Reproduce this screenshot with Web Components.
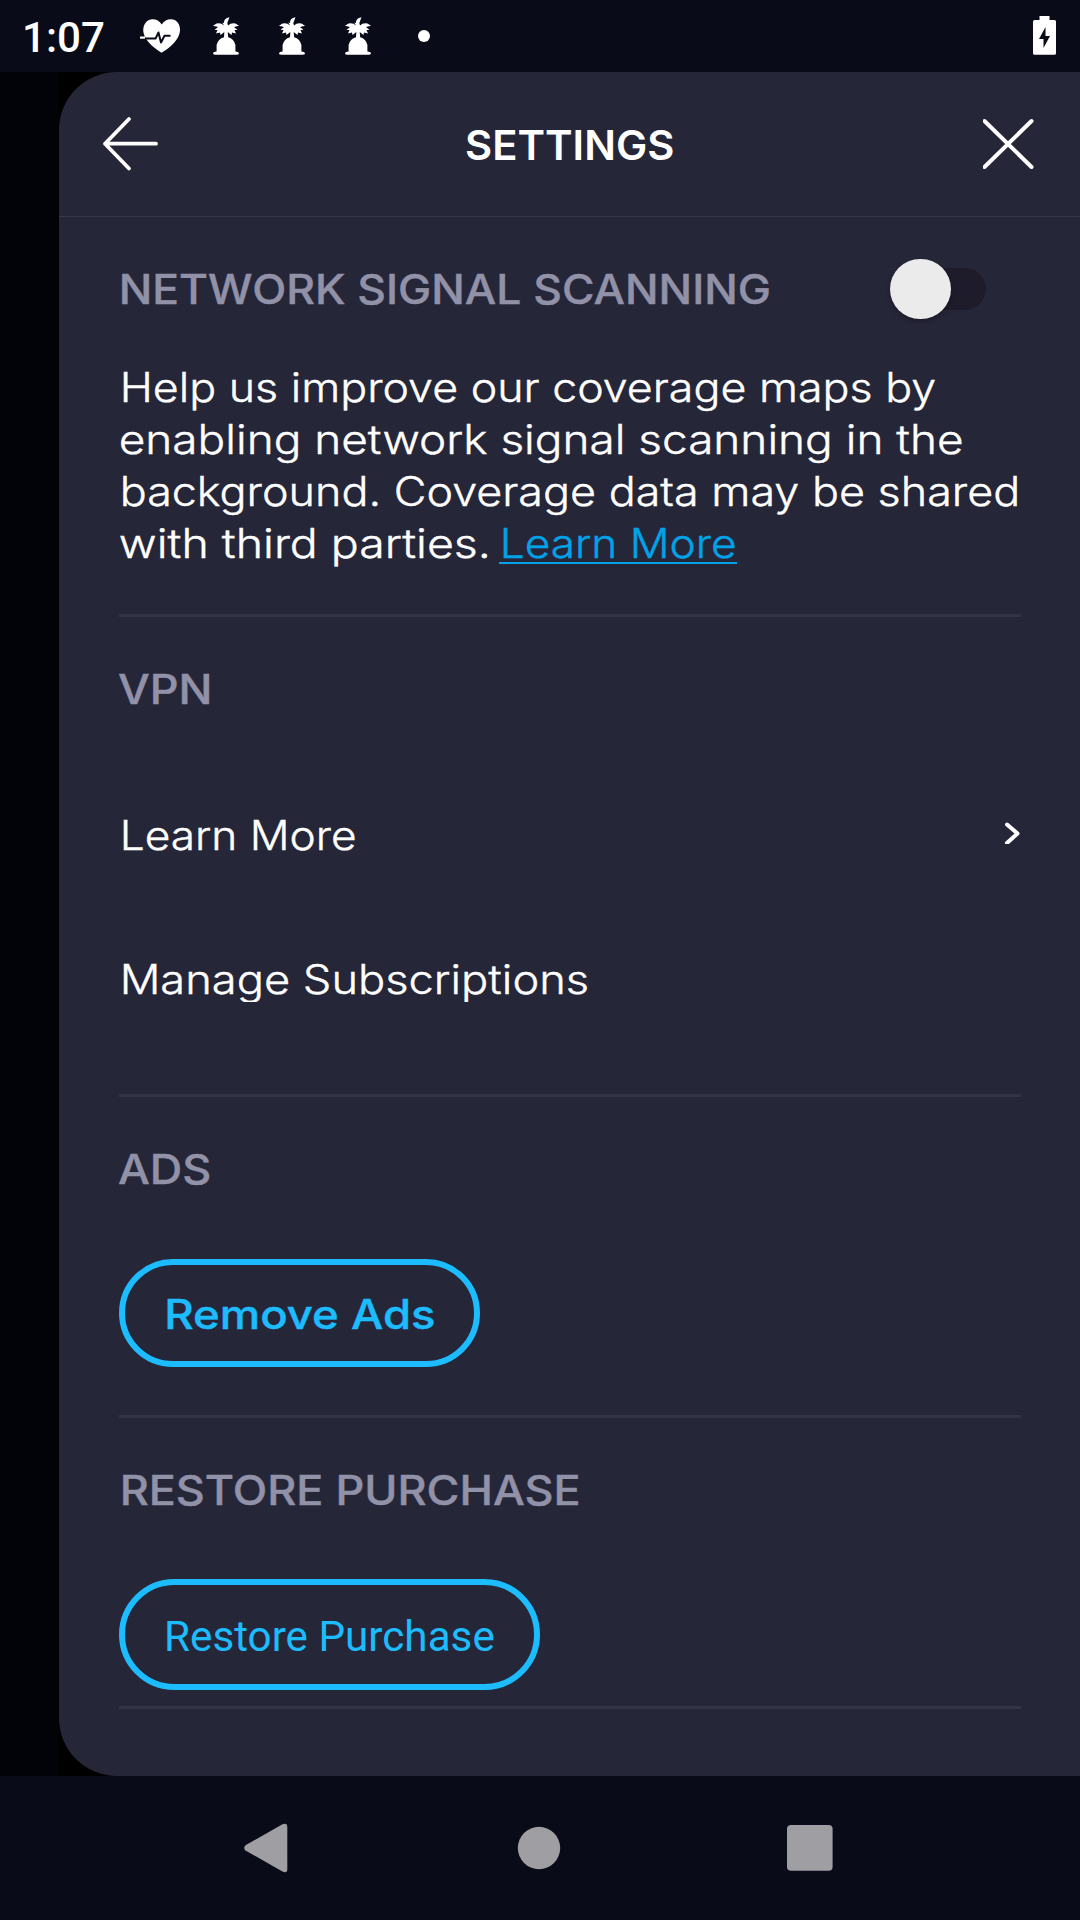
<!DOCTYPE html>
<html lang="en">
<head>
<meta charset="utf-8">
<title>Settings</title>
<style>
html,body{margin:0;padding:0;background:#000}
body{width:1080px;height:1920px;overflow:hidden}
</style>
</head>
<body>
<settings-screen></settings-screen>
<script>
const define = (name, html, setup) => customElements.define(name, class extends HTMLElement {
  connectedCallback() {
    if (this.shadowRoot) return;
    this.attachShadow({ mode: 'open' }).innerHTML = html;
    if (setup) setup.call(this, this.shadowRoot);
  }
});

// One line of text whose ink starts at `indent` and spans `ink` pixels; `base` is the baseline inside the `h` tall box.
define('fit-text', `<style>
:host{display:block;white-space:nowrap;flex:none;font:300 40.5px/1 Inter,sans-serif;-webkit-text-stroke:.4px currentColor}
span{display:block;width:max-content;transform-origin:0 0}
</style><span></span>`, function (root) {
  const span = root.querySelector('span');
  span.textContent = this.textContent;
  const a = n => parseFloat(this.getAttribute(n) || 0);
  const cs = getComputedStyle(this);
  const ctx = document.createElement('canvas').getContext('2d');
  ctx.font = `${cs.fontWeight} ${cs.fontSize} ${cs.fontFamily}`;
  const m = ctx.measureText(this.textContent);
  const s = a('ink') / (m.actualBoundingBoxLeft + m.actualBoundingBoxRight);
  // line-height centring: baseline = h/2 + (ascent - descent)/2
  const h = a('h'), natural = h / 2 + (m.fontBoundingBoxAscent - m.fontBoundingBoxDescent) / 2;
  this.style.cssText += `;width:${a('indent') + a('ink')}px;height:${h}px;line-height:${h}px`;
  span.style.transform = `translate(${a('indent') + m.actualBoundingBoxLeft * s}px,${Math.round(a('base') - natural)}px) scaleX(${s})`;
});

define('palm-icon', `<style>:host{display:block;width:26px;height:38px}svg{display:block}</style>
<svg width="26" height="38" viewBox="0 0 26 38" fill="#fff"><path d="M11 8.500Q8 5.500 3.500 6.500L0 8.800 5 10 1.500 13 4.500 13 3 16.500 7 15.500 7.500 18 11.300 15 11 20.300Q5 22 3.600 28L3.600 34.500Q0 35 0 36.400 0 37.700 3 37.700H23Q26 37.700 26 36.400 26 35 22.400 34.500L22.400 28Q21 22 15.200 20.300L14.700 15 18.500 18 19 15.500 23 16.500 21.500 13 24.500 13 21 10 26 8.800 22.500 6.500Q18 5.500 15 8.500L14.300 6 16.500 0.300Q10.500 1.500 11 6L9.300 5.500Z"/></svg>`);

define('status-bar', `<style>
:host{display:flex;width:1080px;height:72px;background:#0a0b19;align-items:flex-start;color:#fff}
fit-text{font:500 42px/1 Roboto,sans-serif;margin-right:36px;-webkit-text-stroke:0}
.heart{margin-top:18px;width:41px;height:36px;margin-right:32px}
palm-icon{margin:17px 40px 0 0}
.dot{width:12px;height:12px;border-radius:50%;background:#fff;margin:30px 0 0 7px}
.bat{margin:16px 24px 0 auto}
svg{display:block}
</style>
<fit-text indent="25" ink="79" h="72" base="52">1:07</fit-text>
<svg class="heart" viewBox="0 0 41 36"><path fill="#fff" d="M21.500 34.800Q4.500 24 3.300 13.500C2.800 5.500 7.500 1.200 12.500 1.200Q18.500 1.200 21.700 6.500Q25 1.200 31 1.200C36.500 1.200 40.500 6 40 13Q38.500 24.500 21.500 34.800Z"/><path fill="none" stroke="#0a0b19" stroke-width="2" stroke-linejoin="round" d="M1 20.600H15.500L18.500 14.500 21 24.500 24.500 17.800H30.500"/><path fill="none" stroke="#fff" stroke-width="2.200" d="M0 19.600H5"/></svg>
<palm-icon></palm-icon><palm-icon></palm-icon><palm-icon></palm-icon>
<div class="dot"></div>
<svg class="bat" width="23" height="39" viewBox="0 0 23 39"><path fill="#fff" d="M6.500 0H16.500V4H21.500Q23 4 23 5.500V37.200Q23 38.700 21.500 38.700H1.500Q0 38.700 0 37.200V5.500Q0 4 1.500 4H6.500Z"/><path fill="#0a0b19" d="M12.500 11 6 23H10.500V32L17 20H12.500Z"/></svg>`);

define('panel-header', `<style>
:host{display:flex;width:1021px;height:144px;border-bottom:1px solid #38384c;color:#fff}
.back{margin:42px 0 0 42px}.close{margin:45px 39px 0 auto}
svg{display:block;flex:none}
fit-text{font-weight:600;margin-left:305px;-webkit-text-stroke:0}
</style>
<svg class="back" width="60" height="60" viewBox="0 0 60 60" fill="none" stroke="#fff" stroke-width="3.800" stroke-linecap="round" stroke-linejoin="round"><path d="M55 29.700H4M28 5 4 29.700 28 54.500"/></svg>
<fit-text indent="0" ink="207" h="144" base="88">SETTINGS</fit-text>
<svg class="close" width="58" height="54" viewBox="0 0 58 54" fill="none" stroke="#fff" stroke-width="4" stroke-linecap="round"><path d="M1.500 4 48.500 50M48.500 4 1.500 50"/></svg>`);

define('toggle-switch', `<style>
:host{display:flex;align-items:center;width:96px;height:42px;border-radius:21px;background:#1e1c2a}
i{width:60.500px;height:60.500px;border-radius:50%;background:#ebebeb;flex:none;box-shadow:0 3px 5px rgba(0,0,0,.25)}
</style><i></i>`);

define('settings-section', `<style>
:host{display:block;box-sizing:border-box;width:902px;border-bottom:3px solid #333347;color:#fff}
</style><slot></slot>`);

define('pill-button', `<style>
:host{display:flex;box-sizing:border-box;border:6px solid #1cbcff;border-radius:56px;color:#1cbcff}
</style><slot></slot>`);

define('nav-bar', `<style>
:host{display:flex;width:1080px;height:144px;background:#0a0b19;align-items:center;justify-content:center}
svg{display:block}
</style>
<svg width="1080" height="144" viewBox="0 1776 1080 144" fill="#9e9ea3"><path d="M245.500 1845.200 282 1824.500Q287.300 1822 287.300 1827V1869Q287.300 1874 282 1871.300L245.500 1850.500Q242.800 1848 245.500 1845.200Z"/><circle cx="539" cy="1848" r="21.200"/><rect x="787" y="1825" width="45.600" height="45.800" rx="4"/></svg>`);

define('settings-screen', `<style>
:host{display:flex;flex-direction:column;width:1080px;height:1920px;background:#000}
main{display:flex;height:1704px;background:linear-gradient(90deg,#020308 58px,#000 58px)}
.panel{margin-left:59px;width:1021px;border-radius:58px 0 0 58px;background:#262639;overflow:hidden}
.body{padding-left:59.5px;width:902px}
.h{font-weight:500;color:#9191a8}
.row{display:flex;height:144px;align-items:flex-start}
toggle-switch{margin:51px 0 0 122px}
.line{display:flex;height:52px}
.link{color:#00a3e8;width:238px;margin-left:12.5px;border-bottom:2px solid #00a3e8;height:45px}
.s1{height:400px}.s2{height:480px}.s3{height:321px}.s4{height:291px}
.chev{margin:67px 0 0 auto;display:block}
.space{height:38px}
.clip{height:65px;overflow:hidden}
.remove{width:361px;height:108px;margin-top:18px}
.remove fit-text{font-weight:500}
.restore{width:421px;height:111px;margin-top:17px}
.restore fit-text{font-family:Roboto,sans-serif;font-size:42px;font-weight:400;-webkit-text-stroke:0}
</style>
<status-bar></status-bar>
<main><div class="panel">
<panel-header></panel-header>
<div class="body">
<settings-section class="s1">
 <div class="row"><fit-text class="h" indent="3" ink="646.5" h="144" base="87">NETWORK SIGNAL SCANNING</fit-text><toggle-switch></toggle-switch></div>
 <div class="line"><fit-text indent="4" ink="812.5" h="52" base="41">Help us improve our coverage maps by</fit-text></div>
 <div class="line"><fit-text indent="2" ink="841" h="52" base="41">enabling network signal scanning in the</fit-text></div>
 <div class="line"><fit-text indent="4" ink="893.5" h="52" base="41">background. Coverage data may be shared</fit-text></div>
 <div class="line"><fit-text indent="1" ink="367" h="52" base="41">with third parties.</fit-text><div class="link"><fit-text indent="4" ink="232" h="45" base="41">Learn More</fit-text></div></div>
</settings-section>
<settings-section class="s2">
 <fit-text class="h" indent="0" ink="90.500" h="138" base="87">VPN</fit-text>
 <div class="row"><fit-text indent="4" ink="232" h="144" base="95">Learn More</fit-text><svg class="chev" width="18" height="22" viewBox="0 0 18 22"><path d="M4 2.500 14.500 11.500 4 21" fill="none" stroke="#fff" stroke-width="4" stroke-linecap="round" stroke-linejoin="round"/></svg></div>
 <div class="space"></div>
 <div class="clip"><fit-text indent="4" ink="464" h="65" base="57">Manage Subscriptions</fit-text></div>
</settings-section>
<settings-section class="s3">
 <fit-text class="h" indent="0" ink="91" h="144" base="87">ADS</fit-text>
 <pill-button class="remove"><fit-text indent="42.500" ink="266" h="96" base="64">Remove Ads</fit-text></pill-button>
</settings-section>
<settings-section class="s4">
 <fit-text class="h" indent="4" ink="455" h="144" base="87">RESTORE PURCHASE</fit-text>
 <pill-button class="restore"><fit-text indent="42" ink="326.500" h="99" base="66">Restore Purchase</fit-text></pill-button>
</settings-section>
</div></div></main>
<nav-bar></nav-bar>`);
</script>
</body>
</html>
